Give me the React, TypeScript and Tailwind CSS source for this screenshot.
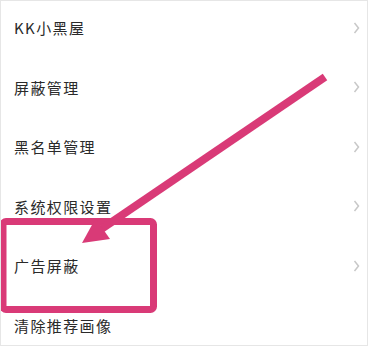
const items = ["KK小黑屋", "屏蔽管理", "黑名单管理", "系统权限设置", "广告屏蔽", "清除推荐画像"];

function Chevron() {
  return (
    <svg width="7" height="12" viewBox="0 0 7 12" fill="none" stroke="#c8c8c8" strokeWidth="1.5" aria-hidden="true">
      <path d="M1.5 1 L5.5 6 L1.5 11" />
    </svg>
  );
}

export default function App() {
  return (
    <div className="relative h-[346px] w-[368px] overflow-hidden border border-[#e6e6e6] bg-white">
      <ul className="-mt-[3px]">
        {items.map((label, i) => (
          <li key={label} className="flex h-[59.5px] items-center justify-between pl-[13px] pr-[7px]">
            <span
              className="text-[15px] leading-none tracking-[1.4px] text-[#2a2a2a]"
              style={{ fontFamily: '"Noto Sans CJK SC", "Noto Sans", sans-serif' }}
            >
              {label}
            </span>
            {i < items.length - 1 ? <Chevron /> : null}
          </li>
        ))}
      </ul>

      {/* annotation: pink arrow + highlight box */}
      <svg className="pointer-events-none absolute left-[-1px] top-[-1px]" width="368" height="346" viewBox="0 0 368 346" aria-hidden="true">
        <rect x="3" y="221.5" width="150.5" height="88" rx="3" fill="none" stroke="#d93a77" strokeWidth="7" />
        <line x1="325" y1="77" x2="100" y2="230" stroke="#d93a77" strokeWidth="8" />
        <polygon points="82,243 95.5,218.5 110,239" fill="#d93a77" />
      </svg>
    </div>
  );
}
